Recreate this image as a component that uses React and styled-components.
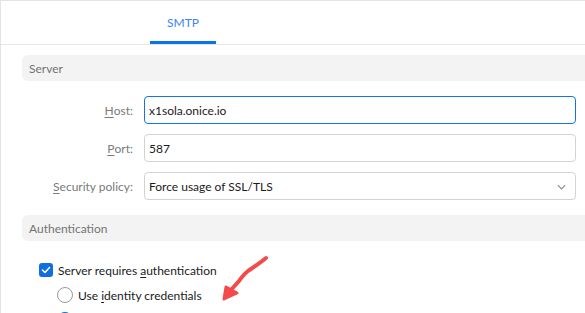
import React from "react";
import styled, { createGlobalStyle } from "styled-components";

const Global = createGlobalStyle`
  html, body {
    margin: 0;
    padding: 0;
    background: #fff;
  }
  * {
    box-sizing: border-box;
  }
`;

const App = () => {
  return (
    <>
      <Global />
      <Window>
        <TabBar>
          <Tab active>SMTP</Tab>
        </TabBar>
        <Body>
          <SectionHeader>Server</SectionHeader>
          <Form>
            <Label>
              <u>H</u>ost:
            </Label>
            <Input focused>x1sola.onice.io</Input>
            <Label>
              <u>P</u>ort:
            </Label>
            <Input>587</Input>
            <Label>
              <u>S</u>ecurity policy:
            </Label>
            <Input>
              Force usage of SSL/TLS
              <Chevron viewBox="0 0 10 6">
                <path d="M1 1 L5 5 L9 1" />
              </Chevron>
            </Input>
          </Form>
          <SectionHeader>Authentication</SectionHeader>
          <Options>
            <OptionRow>
              <Checkbox>
                <svg viewBox="0 0 14 14" width="14" height="14">
                  <path d="M3.5 7.2 L6 9.5 L10.5 4.5" />
                </svg>
              </Checkbox>
              <span>
                Server requires <u>a</u>uthentication
              </span>
            </OptionRow>
            <OptionRow indent>
              <Radio />
              <span>
                Use <u>i</u>dentity credentials
              </span>
            </OptionRow>
            <OptionRow indent>
              <Radio checked />
              <span>Use the following credentials</span>
            </OptionRow>
          </Options>
          <Arrow viewBox="0 0 60 50">
            <path
              d="M46 3 C40 8 34 12 28 16 C24 19 22 22 19 26 L10 36"
              fill="none"
              stroke="#f24b4b"
              strokeWidth="4"
              strokeLinecap="round"
            />
            <path d="M4 44 L6 32 L17 38 Z" fill="#f24b4b" stroke="#f24b4b" strokeWidth="3" strokeLinejoin="round" />
          </Arrow>
        </Body>
      </Window>
    </>
  );
};

export default App;

const Window = styled.div`
  position: relative;
  width: 585px;
  height: 313px;
  overflow: hidden;
  border-top: 1px solid #e3e3e3;
  border-left: 1px solid #e3e3e3;
  font-family: "Segoe UI", Lato, "Noto Sans", sans-serif;
  font-size: 12px;
  color: #1f1f1f;
`;

const TabBar = styled.div`
  display: flex;
  height: 44px;
  padding-left: 149px;
  border-bottom: 1px solid #e6e6e6;
`;

const Tab = styled.div`
  width: 66px;
  display: flex;
  align-items: center;
  justify-content: center;
  padding-top: 2px;
  font-size: 12px;
  color: ${(p) => (p.active ? "#3a86ee" : "#555")};
  border-bottom: 3px solid ${(p) => (p.active ? "#0a72ea" : "transparent")};
`;

const Body = styled.div`
  padding: 10px 9px 0 21px;
`;

const SectionHeader = styled.div`
  height: 26px;
  margin-right: -9px;
  display: flex;
  align-items: center;
  padding-left: 7px;
  background: #f3f3f3;
  border-radius: 6px 0 0 6px;
  color: #737373;
  font-size: 12px;
`;

const Form = styled.div`
  display: grid;
  grid-template-columns: 111px 1fr;
  column-gap: 11px;
  row-gap: 10px;
  margin: 15px 0;
`;

const Label = styled.div`
  display: flex;
  align-items: center;
  justify-content: flex-end;
  color: #7a7a7a;
  font-size: 12px;
  u {
    text-decoration-thickness: 1px;
    text-underline-offset: 2px;
  }
`;

const Input = styled.div`
  position: relative;
  height: 28px;
  display: flex;
  align-items: center;
  padding-left: 4px;
  border: 1px solid ${(p) => (p.focused ? "#1273eb" : "#d3d3d3")};
  border-radius: 4px;
  color: #1b1b1b;
  font-size: 12px;
`;

const Chevron = styled.svg`
  position: absolute;
  right: 9px;
  top: 11px;
  width: 9px;
  height: 6px;
  fill: none;
  stroke: #8a8a8a;
  stroke-width: 1.3;
`;

const Options = styled.div`
  display: flex;
  flex-direction: column;
  gap: 9px;
  padding: 21px 0 0 17px;
`;

const OptionRow = styled.div`
  display: flex;
  align-items: center;
  gap: 4px;
  height: 16px;
  padding-left: ${(p) => (p.indent ? "18px" : "0")};
  font-size: 12px;
  color: #1b1b1b;
  u {
    text-underline-offset: 2px;
  }
`;

const Checkbox = styled.span`
  display: inline-flex;
  align-items: center;
  justify-content: center;
  width: 14px;
  height: 14px;
  margin-right: 1px;
  border-radius: 3px;
  background: #0f6fe0;
  svg {
    fill: none;
    stroke: #fff;
    stroke-width: 1.6;
    stroke-linecap: round;
    stroke-linejoin: round;
  }
`;

const Radio = styled.span`
  width: 16px;
  height: 16px;
  border-radius: 50%;
  border: ${(p) => (p.checked ? "5px solid #0f6fe0" : "1px solid #9a9a9a")};
  background: #fff;
  margin-right: 1px;
`;

const Arrow = styled.svg`
  position: absolute;
  left: 219px;
  top: 254px;
  width: 60px;
  height: 50px;
`;
